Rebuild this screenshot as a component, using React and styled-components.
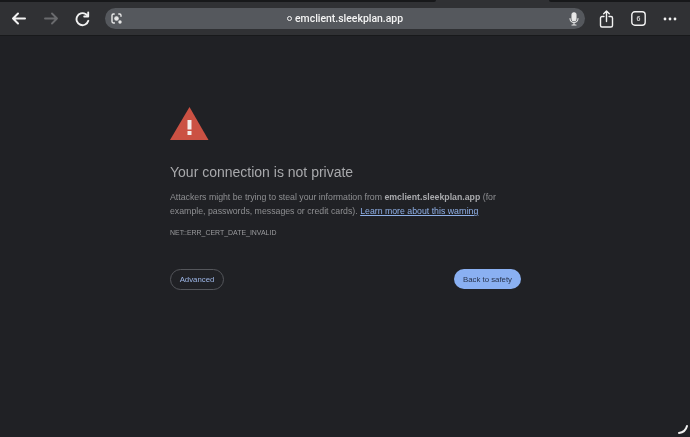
import React from "react";
import styled, { createGlobalStyle } from "styled-components";

const Global = createGlobalStyle`
  html, body { margin: 0; padding: 0; background: #202125; }
  #root { width: 690px; height: 437px; overflow: hidden; }
`;
const Page = styled.div`
  position: relative; width: 690px; height: 437px; display: flex; flex-direction: column;
  background: #202125; font-family: "Liberation Sans", Arial, sans-serif; overflow: hidden;
`;
const Chrome = styled.header`
  height: 35px; flex: none; background: #303134; border-bottom: 1px solid #18191b;
  box-sizing: content-box; display: flex; flex-direction: column; filter: blur(0.3px);
`;
const TabStrip = styled.div`
  height: 2px; flex: none; display: flex; background: #303134;
`;
const TabEdge = styled.div`
  flex: ${p => p.$grow}; background: #17181a;
  border-radius: ${p => p.$side === "left" ? "0 0 4px 0" : "0 0 0 4px"};
`;
const TabGap = styled.div` width: 113px; flex: none; `;
const Toolbar = styled.div`
  flex: 1; display: flex; align-items: center; padding: 0 8px 0 10px;
`;
const IconBtn = styled.span`
  display: flex; width: 16px; justify-content: center; align-items: center; flex: none;
  margin-left: ${p => p.$gap || 0}px;
  color: ${p => p.$c || "#f2f2f2"};
`;
const Omni = styled.div`
  width: 480px; height: 21px; margin: 0 0 0 14px; flex: none; border-radius: 11px; background: #55585d;
  display: flex; align-items: center; justify-content: space-between; padding: 0 6px 0 6px; box-sizing: border-box;
  position: relative; color: #e8e8e8;
`;
const Url = styled.div`
  position: absolute; left: 182px; top: 3px; display: flex; align-items: center; gap: 3px;
  font-size: 10.45px; line-height: 15px; color: #f4f4f4; font-weight: 500;
  font-family: Roboto, "Liberation Sans", sans-serif;
`;
const Dot = styled.i`
  display: block; width: 5px; height: 5px; box-sizing: border-box; border: 1.8px solid #f4f4f4; border-radius: 50%;
`;
const Main = styled.main`
  flex: 1; padding: 71px 0 0 170px; width: 351px; display: flex; flex-direction: column; filter: blur(0.3px);
`;
const Heading = styled.h1`
  margin: 22px 0 0; font-size: 14px; line-height: 18px; font-weight: 400; color: #a8a9ac;
`;
const Para = styled.p`
  margin: 9px 0 0; font-size: 8.75px; line-height: 14px; color: #8e8f92; white-space: nowrap;
  strong { color: #a8a9ac; font-weight: 700; }
`;
const Learn = styled.a`
  color: #8fb0e8; text-decoration: underline; 
`;
const Code = styled.div`
  margin-top: 10px; font-size: 6.95px; line-height: 10px; color: #9a9b9e; white-space: nowrap;
`;
const Actions = styled.div`
  margin-top: 31px; display: flex; justify-content: space-between; align-items: center;
`;
const Advanced = styled.button`
  width: 54px; height: 21px; border-radius: 11px; border: 1px solid #54565b; background: transparent;
  color: #9db6e6; font: 400 7.8px "Liberation Sans", sans-serif; padding: 0;
`;
const Back = styled.button`
  width: 67px; height: 20px; margin-top: -1px; border-radius: 10px; border: 0; background: #8ab0f2;
  color: #28344e; font: 400 7.8px "Liberation Sans", sans-serif; padding: 0;
`;
const Grabber = styled.svg`
  position: absolute; right: 1px; bottom: 1px;
`;

const Stroke = { fill: "none", stroke: "currentColor", strokeLinecap: "round", strokeLinejoin: "round" };

export default function App() {
  return (
    <Page>
      <Global />
      <Chrome>
        <TabStrip>
          <TabEdge $grow="436" $side="left" />
          <TabGap />
          <TabEdge $grow="141" $side="right" />
        </TabStrip>
        <Toolbar>
          <IconBtn>
            <svg width="15" height="13" viewBox="0 0 15 13" {...Stroke} strokeWidth="2"><path d="M14 6.5H2M7 1.5 2 6.5l5 5" /></svg>
          </IconBtn>
          <IconBtn $c="#696a6d" $gap={17}>
            <svg width="15" height="13" viewBox="0 0 15 13" {...Stroke} strokeWidth="1.9"><path d="M1 6.5h12M8 1.5l5 5-5 5" /></svg>
          </IconBtn>
          <IconBtn $gap={16}>
            <svg width="16" height="16" viewBox="0 0 16 16" {...Stroke} strokeWidth="1.9"><path d="M13.3 9.8A6 6 0 1 1 10.6 3L12.5 4.6" /><path d="M13.2 1.5v4h-4" /></svg>
          </IconBtn>
          <Omni>
            <svg width="11" height="11" viewBox="0 0 11 11" {...Stroke} strokeWidth="1.4">
              <path d="M3.2 1H2.4A1.4 1.4 0 0 0 1 2.4v6.2A1.4 1.4 0 0 0 2.4 10h1M7.8 1h.8A1.4 1.4 0 0 1 10 2.4v.8" />
              <circle cx="5.5" cy="5.5" r="1.6" fill="currentColor" />
              <circle cx="9" cy="9" r="1" fill="currentColor" />
            </svg>
            <Url><Dot />emclient.sleekplan.app</Url>
            <svg width="10" height="14" viewBox="0 0 10 14" {...Stroke} strokeWidth="1.1">
              <rect x="3" y="0.8" width="4" height="8" rx="2" fill="currentColor" />
              <path d="M1 6.5a4 4 0 0 0 8 0M5 10.5V13M3 13h4" />
            </svg>
          </Omni>
          <IconBtn $gap={13}>
            <svg width="15" height="18" viewBox="0 0 15 18" {...Stroke} strokeWidth="1.4"><path d="M5 6.5H3A1.5 1.5 0 0 0 1.5 8v7.5A1.5 1.5 0 0 0 3 17h9a1.5 1.5 0 0 0 1.5-1.5V8A1.5 1.5 0 0 0 12 6.5h-2" /><path d="M7.5 11.5V1.2M4.7 3.8l2.8-2.8 2.8 2.8" /></svg>
          </IconBtn>
          <IconBtn $gap={16}>
            <svg width="15" height="15" viewBox="0 0 15 15"><rect x="0.8" y="0.8" width="13.4" height="13.4" rx="3" fill="none" stroke="currentColor" strokeWidth="1.4" /><text x="7.5" y="10" textAnchor="middle" fontSize="7" fontWeight="700" fill="#c8c8c8" fontFamily="Liberation Sans">6</text></svg>
          </IconBtn>
          <IconBtn $gap={16}>
            <svg width="14" height="4" viewBox="0 0 14 4" fill="currentColor"><circle cx="2" cy="2" r="1.4" /><circle cx="7" cy="2" r="1.4" /><circle cx="12" cy="2" r="1.4" /></svg>
          </IconBtn>
        </Toolbar>
      </Chrome>
      <Main>
        <svg width="39" height="34" viewBox="0 0 39 34" style={{ flex: "none" }}>
          <path d="M19.5 0 38.5 33H0Z" fill="#cb5143" />
          <rect x="17.5" y="13" width="4" height="9.5" fill="#f4ece9" />
          <rect x="17.5" y="24" width="4" height="4" fill="#f4ece9" />
        </svg>
        <Heading>Your connection is not private</Heading>
        <Para>
          Attackers might be trying to steal your information from <strong>emclient.sleekplan.app</strong> (for<br />
          example, passwords, messages or credit cards). <Learn href="#">Learn more about this warning</Learn>
        </Para>
        <Code>NET::ERR_CERT_DATE_INVALID</Code>
        <Actions>
          <Advanced>Advanced</Advanced>
          <Back>Back to safety</Back>
        </Actions>
      </Main>
      <Grabber width="12" height="12" viewBox="0 0 12 12" fill="none" stroke="#f0f0f0" strokeWidth="2" strokeLinecap="round"><path d="M10 2C9 6 6 8.5 2 9" /></Grabber>
    </Page>
  );
}
